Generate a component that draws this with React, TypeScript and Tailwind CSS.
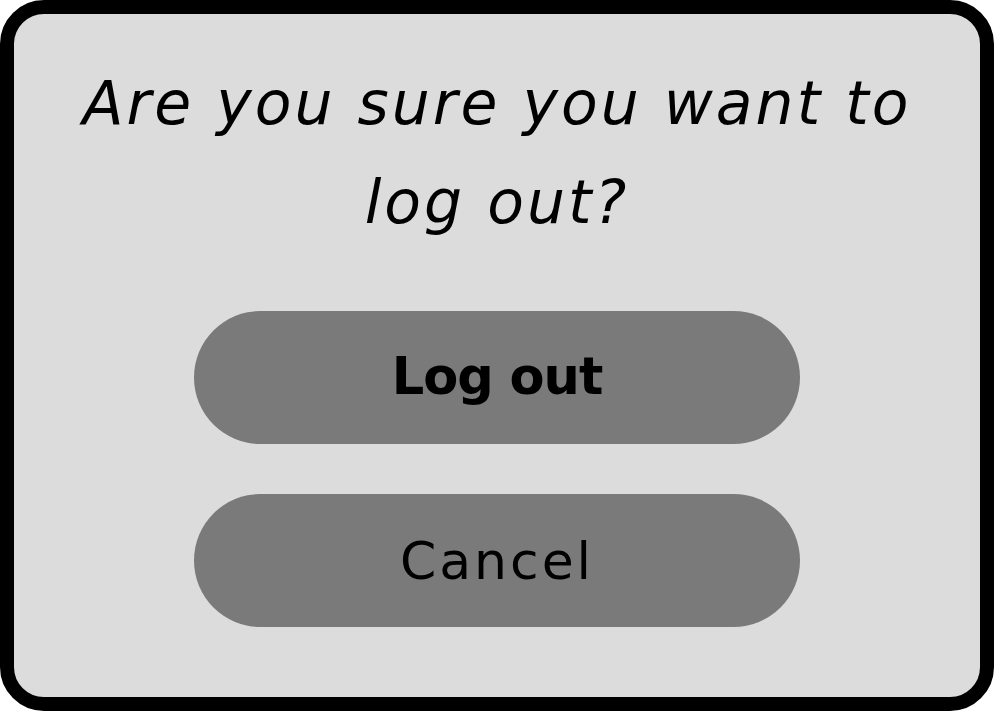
export default function App() {
  return (
    <div className="w-[994px] h-[711px] bg-white">
      <div
        className="w-full h-full border-[14px] border-black rounded-[44px] bg-[#dcdcdc] flex flex-col items-center"
        style={{ fontFamily: '"DejaVu Sans", "Open Sans", sans-serif' }}
      >
        <h1 className="mt-[40px] text-center italic text-[60px] leading-[99px] text-black tracking-[3px]">
          Are you sure you want to
          <br />
          log out?
        </h1>
        <div className="mt-[59px] flex flex-col gap-[50px]">
          <button className="w-[606px] h-[133px] rounded-full bg-[#7a7a7a] text-black text-[51px] font-bold tracking-[-1px]">
            Log out
          </button>
          <button className="w-[606px] h-[133px] rounded-full bg-[#7a7a7a] text-black text-[52px] tracking-[3px]">
            Cancel
          </button>
        </div>
      </div>
    </div>
  );
}
